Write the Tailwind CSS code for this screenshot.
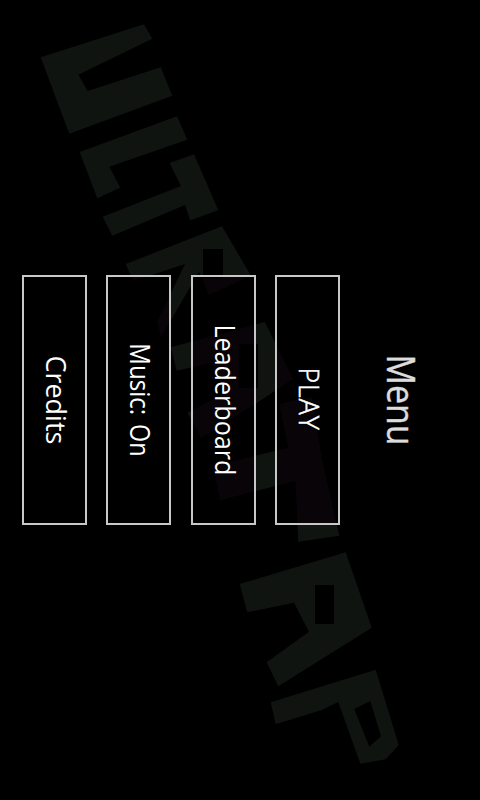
<!DOCTYPE html>
<html lang="en">
<head>
<meta charset="utf-8">
<title>Menu</title>
<script src="https://cdn.jsdelivr.net/npm/@tailwindcss/browser@4"></script>
</head>
<body class="bg-black">
<main class="relative flex h-[800px] w-[480px] items-center overflow-hidden bg-black pl-[22px] font-['Open_Sans','Noto_Sans',sans-serif] text-white">
  <svg class="absolute inset-0" width="480" height="800" viewBox="0 0 480 800" aria-hidden="true">
    <defs>
      <clipPath id="panels"><path d="M22 275h65v250h-65zM106 275h65v250h-65zM191 275h65v250h-65zM275 275h65v250h-65z"/></clipPath>
      <path id="logo" fill-rule="evenodd" d="M40.7 57.3L144 24.3L152.3 38.7L78.3 74.7L87.7 91L160.7 67.3L172.3 95.7L69.3 133.7Z
        M79.7 152L177 116.3L187.3 139.7L109.3 166.7L120.3 187.7L97.3 198.3Z
        M102.7 216.7L181 186L169.7 163L194 154.3L218.3 210.3L190.3 220.3L185 205L112.3 235.7Z
        M125.7 264L222 226.3L251 275.7L208.7 295.3L202 278L199 271.7L161 337.3L157 321.7L185 264L133.3 281Z
        M203 249V278H223V249Z
        M171 347.3L264.7 322L293.3 378.7L260 400.7L201 438L187.7 412.7L225 393L211.7 362.7L176.7 370.7Z
        M239 344V388H258V344Z
        M213 466L288.3 447.7L279 404L311.7 396.7L322.3 460L339.3 535.7L298.3 541.7L295.3 481L220 500.3Z
        M239.7 584L345.7 552.3L371.7 627.7L278.3 686.3L266.7 662.3L309 631.7L294 602.7L247.3 612.3Z
        M315 585V624H334V585Z
        M270.7 702.3L375.7 669.7L398.7 745L385.7 759.3L360.3 763.7L338.3 702L321.7 710L275.7 724.3Z
        M354.3 709L370.3 701L381 736.3L369.3 746.7Z"/>
    </defs>
    <use href="#logo" fill="#101410"/>
    <g clip-path="url(#panels)"><path fill="#000" d="M22 275h318v250H22z"/><use href="#logo" fill="#080407"/></g>
  </svg>
  <nav class="relative flex text-[26.6px]">
    <button class="h-[250px] w-[65px] border-2 border-[#c8c8c8]">
      <svg class="block h-full w-full fill-white" viewBox="0 0 61 246"><text transform="translate(21.6 78.4) rotate(90)" textLength="89" lengthAdjust="spacingAndGlyphs">Credits</text></svg>
    </button>
    <button class="ml-[19px] h-[250px] w-[65px] border-2 border-[#c8c8c8]">
      <svg class="block h-full w-full fill-white" viewBox="0 0 61 246"><text transform="translate(21.6 66.2) rotate(90)" textLength="72" lengthAdjust="spacingAndGlyphs">Music:</text><text transform="translate(21.6 147) rotate(90)" textLength="32.5" lengthAdjust="spacingAndGlyphs">On</text></svg>
    </button>
    <button class="ml-[20px] h-[250px] w-[65px] border-2 border-[#c8c8c8]">
      <svg class="block h-full w-full fill-white" viewBox="0 0 61 246"><text transform="translate(21.6 47.4) rotate(90)" textLength="151" lengthAdjust="spacingAndGlyphs">Leaderboard</text></svg>
    </button>
    <button class="ml-[19px] h-[250px] w-[65px] border-2 border-[#c8c8c8]">
      <svg class="block h-full w-full fill-white stroke-white" stroke-width="0.55" viewBox="0 0 61 246"><text class="font-light" transform="translate(21.8 90.4) rotate(90)" textLength="62.5" lengthAdjust="spacing">PLAY</text></svg>
    </button>
  </nav>
  <h1 class="relative ml-[16px] h-[120px] w-[90px] text-[39px]">
    <svg class="block h-full w-full overflow-visible fill-[#dcdcdc] stroke-[#dcdcdc]" stroke-width="0.4" viewBox="0 0 90 120"><text transform="translate(30.5 14.6) rotate(90)" textLength="91" lengthAdjust="spacingAndGlyphs">Menu</text></svg>
  </h1>
</main>
</body>
</html>
